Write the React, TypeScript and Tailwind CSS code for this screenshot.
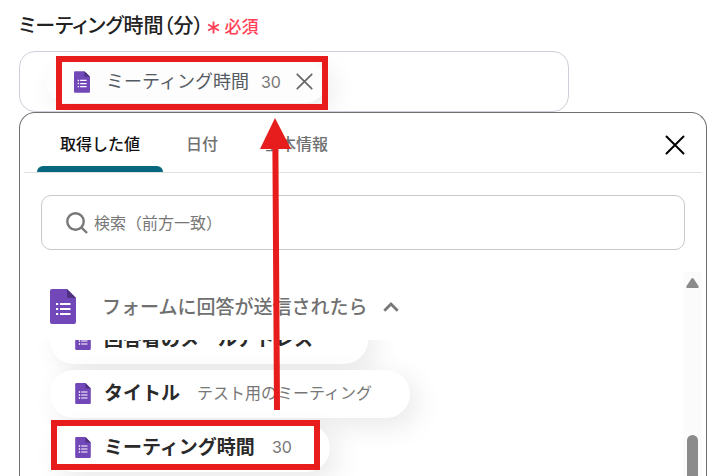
import React from 'react';

interface FormValue {
  label: string;
  value?: string;
  highlighted?: boolean;
}

const tabs = ['取得した値', '日付', '基本情報'];

const formValues: FormValue[] = [
  { label: '回答者のメールアドレス' },
  { label: 'タイトル', value: 'テスト用のミーティング' },
  { label: 'ミーティング時間', value: '30', highlighted: true },
];

function FormsIcon({ className }: { className?: string }) {
  return (
    <svg viewBox="0 0 26 35" className={className} aria-hidden="true">
      <path d="M2 0H17L26 9V33a2 2 0 0 1-2 2H2a2 2 0 0 1-2-2V2a2 2 0 0 1 2-2Z" fill="#7248b9" />
      <path d="M17 0 26 9H18.500A1.500 1.500 0 0 1 17 7.500Z" fill="#4f3083" />
      <path d="M10 15H20.500M10 20H20.500M10 25H20.500" stroke="#fff" strokeWidth="2" />
      <path d="M6 15H8.200M6 20H8.200M6 25H8.200" stroke="#fff" strokeWidth="2.200" />
    </svg>
  );
}

function CloseIcon({ className, strokeWidth }: { className?: string; strokeWidth: number }) {
  return (
    <svg
      viewBox="0 0 20 20"
      className={className}
      fill="none"
      stroke="currentColor"
      strokeWidth={strokeWidth}
      strokeLinecap="round"
      aria-hidden="true"
    >
      <path d="M1.500 1.500 18.500 18.500M18.500 1.500 1.500 18.500" />
    </svg>
  );
}

function ValueChip({ item }: { item: FormValue }) {
  return (
    <button
      type="button"
      className="relative flex h-12 items-center rounded-full bg-white pb-[2px] pl-[25px] pr-[38px] shadow-[8px_8px_28px_rgba(0,0,0,0.09)]"
    >
      <FormsIcon className="h-[21px] w-4" />
      <span className="ml-[13px] pb-[2px] text-[19px] font-bold text-[#2a2a2a]">{item.label}</span>
      <span className="ml-[17px] font-['Inter','Noto_Sans_CJK_JP',sans-serif] text-[16px] text-[#777]">
        {item.value}
      </span>
      {item.highlighted && (
        <span className="pointer-events-none absolute -top-1 bottom-[2px] left-px right-[10px] border-6 border-[#e71c1c]" />
      )}
    </button>
  );
}

export default function App() {
  return (
    <div className="relative flex h-screen flex-col overflow-hidden bg-white pl-[19px] pr-[18px] pt-3 font-['Noto_Sans_CJK_JP',sans-serif]">
      {/* Field label */}
      <div className="flex h-[27px] items-center">
        <span
          id="meeting-time-label"
          className="pb-[2px] text-[20px] font-medium text-[#222] [font-feature-settings:'palt']"
        >
          ミーティング時間（分）
        </span>
        <span className="ml-1 flex items-center gap-1 text-[17px] font-medium text-[#ff4158]">
          <svg viewBox="0 0 14 14" className="mt-1 h-[13px] w-[13px]" stroke="currentColor" strokeWidth="2" aria-hidden="true">
            <path d="M7 .5V13.500M1.200 3.700 12.800 10.300M12.800 3.700 1.200 10.300" />
          </svg>
          必須
        </span>
      </div>

      {/* Selected value */}
      <div
        role="group"
        aria-labelledby="meeting-time-label"
        className="mt-3 flex h-[61px] w-4/5 shrink-0 items-center overflow-hidden rounded-2xl border border-[#cdd0d8] pl-[26px]"
      >
        <div className="relative flex h-[42px] items-center rounded-full bg-[#fdfdfd] pl-7 pr-[13px] shadow-[8px_8px_28px_rgba(0,0,0,0.09)]">
          <FormsIcon className="h-[22px] w-4" />
          <span className="ml-4 pb-[2px] text-[18px] text-[#555b63]">ミーティング時間</span>
          <span className="ml-3 font-['Inter','Noto_Sans_CJK_JP',sans-serif] text-[16px] text-[#777]">30</span>
          <button type="button" aria-label="削除" className="ml-[15px] text-[#666]">
            <CloseIcon className="h-[17px] w-[17px]" strokeWidth={2} />
          </button>
          <span className="pointer-events-none absolute -bottom-[7px] -right-[2px] -top-[5px] left-[10px] border-6 border-[#e71c1c]" />
        </div>
      </div>

      {/* Picker panel */}
      <div className="flex min-h-0 flex-1 flex-col overflow-hidden rounded-t-2xl border border-b-0 border-[#707070] bg-white">
        <div className="mx-1 flex h-[60px] shrink-0 items-stretch border-b border-[#e0e0e0] pl-[13px] pr-[17px]">
          <div role="tablist" className="flex flex-1">
            {tabs.map((tab, index) => (
              <button
                key={tab}
                type="button"
                role="tab"
                aria-selected={index === 0}
                className={
                  index === 0
                    ? 'relative px-[23px] text-[16px] font-medium text-[#111]'
                    : 'px-[23px] text-[16px] font-medium text-[#707070]'
                }
              >
                {tab}
                {index === 0 && <span className="absolute inset-x-0 bottom-0 h-[6px] rounded-t-md bg-[#07677f]" />}
              </button>
            ))}
          </div>
          <button type="button" aria-label="閉じる" className="mt-1 text-black">
            <CloseIcon className="h-5 w-5" strokeWidth={2} />
          </button>
        </div>

        <div className="mx-[21px] mt-[22px] flex h-[55px] shrink-0 items-center rounded-[10px] border border-[#c8c8c8] pl-6 pr-4">
          <svg viewBox="0 0 22 22" className="h-[22px] w-[22px] shrink-0 text-[#777]" fill="none" stroke="currentColor" strokeWidth="2.400" aria-hidden="true">
            <circle cx="9.500" cy="9.500" r="8.200" />
            <path d="M15.500 15.500 21 21" />
          </svg>
          <input
            type="text"
            aria-label="検索"
            placeholder="検索（前方一致）"
            className="ml-[6px] w-full bg-transparent pb-[2px] text-[16px] outline-none placeholder:text-[#777]"
          />
        </div>

        <div className="mr-1 mt-[22px] flex min-h-0 flex-1">
          <div className="flex-1 overflow-hidden">
            <button
              type="button"
              className="relative z-10 flex h-[68px] w-full items-center bg-white pl-[30px]"
            >
              <FormsIcon className="h-[35px] w-[26px]" />
              <span className="ml-[26px] text-[19px] font-medium text-[#707070]">フォームに回答が送信されたら</span>
              <svg viewBox="0 0 16 10" className="ml-4 mt-[2px] h-[10px] w-4" fill="none" stroke="#777" strokeWidth="2.800" aria-hidden="true">
                <path d="M1.300 8.700 8 2 14.700 8.700" />
              </svg>
            </button>
            <div className="-mt-6 flex flex-col items-start gap-[6px] pl-[30px]">
              {formValues.map((item) => (
                <ValueChip key={item.label} item={item} />
              ))}
            </div>
          </div>

          {/* Scrollbar */}
          <div className="flex w-[19px] flex-col items-center bg-[#fbfbfb] pt-[6px]">
            <svg viewBox="0 0 13 10" className="h-[10px] w-[13px]" fill="#8b8b8b" aria-hidden="true">
              <path d="M7.500.6 12.600 8.300Q13.200 10 11.600 10H1.400Q-.2 10 .4 8.300L5.500.6Q6.500-.5 7.500.6Z" />
            </svg>
            <div className="mt-[147px] w-[11px] flex-1 rounded-t-full bg-[#8b8b8b]" />
          </div>
        </div>
      </div>

      {/* Arrow from the list value up to the field */}
      <svg
        viewBox="0 0 32 292"
        className="pointer-events-none absolute left-[260px] top-[118px] z-20 h-[292px] w-8"
        fill="#e71c1c"
        aria-hidden="true"
      >
        <path d="M15 0 31 31H18.400L20 292H14L12.400 31H0Z" />
      </svg>
    </div>
  );
}
